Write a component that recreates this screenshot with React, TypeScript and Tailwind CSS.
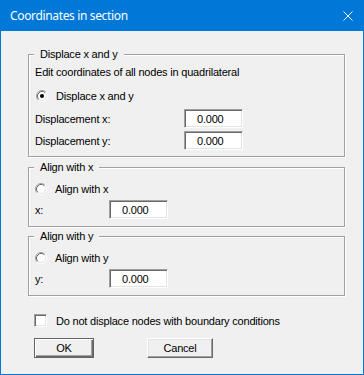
import React from 'react';

const Radio = ({ checked }: { checked?: boolean }) => (
  <svg width="12" height="12" viewBox="0 0 12 12" className="shrink-0">
    <circle cx="6" cy="6" r="4.5" fill="#fff" />
    <path d="M2.11 9.89 A5.5 5.5 0 0 1 9.89 2.11" fill="none" stroke="#a0a0a0" strokeWidth="1" />
    <path d="M9.89 2.11 A5.5 5.5 0 0 1 2.11 9.89" fill="none" stroke="#fff" strokeWidth="1" />
    <path d="M2.82 9.18 A4.5 4.5 0 0 1 9.18 2.82" fill="none" stroke="#696969" strokeWidth="1" />
    <path d="M9.18 2.82 A4.5 4.5 0 0 1 2.82 9.18" fill="none" stroke="#e3e3e3" strokeWidth="1" />
    {checked && <circle cx="6" cy="6" r="2" fill="#000" />}
  </svg>
);

const Field = ({ value }: { value: string }) => (
  <div className="flex h-[19px] w-[59px] items-center border border-t-[#a0a0a0] border-l-[#a0a0a0] border-b-white border-r-white bg-white pl-[12px] shadow-[inset_1px_1px_0_#696969,inset_-1px_-1px_0_#e3e3e3]">
    {value}
  </div>
);

const Group = ({ label, className, children }: { label: string; className: string; children: React.ReactNode }) => (
  <div className={`relative w-[317px] border border-[#a0a0a0] shadow-[inset_1px_1px_0_#fff,1px_1px_0_#fff] ${className}`}>
    <span className="absolute left-[5px] top-[-8px] bg-[#f0f0f0] px-[6px] leading-[14px]">{label}</span>
    {children}
  </div>
);

export default function App() {
  return (
    <div className="flex h-[375px] w-[364px] flex-col border-x border-b border-[#0078d7] bg-[#f0f0f0] text-[11px] leading-[14px] tracking-[-0.2px] text-black font-['Liberation_Sans',Arial,sans-serif]">
      {/* title bar */}
      <div className="flex h-[31px] shrink-0 items-center justify-between bg-[#0078d7] pl-[9px] pr-[10px] text-[12px] tracking-[-0.35px] text-white font-['Noto_Sans',sans-serif]">
        <span>Coordinates in section</span>
        <svg width="10" height="10" viewBox="0 0 10 10">
          <path d="M0.5 0.5 L9.5 9.5 M9.5 0.5 L0.5 9.5" stroke="#fff" strokeWidth="1" />
        </svg>
      </div>

      <div className="flex flex-col pl-[27px]">
        <Group label="Displace x and y" className="mt-[23px] h-[103px]">
          <div className="flex flex-col px-[6px]">
            <div className="mt-[10px] h-[14px]">Edit coordinates of all nodes in quadrilateral</div>
            <div className="mt-[10px] flex h-[14px] items-center gap-[8px] pl-[1px]">
              <Radio checked />
              <span>Displace x and y</span>
            </div>
            <div className="mt-[6px] flex h-[19px] items-center">
              <span className="w-[149px]">Displacement x:</span>
              <Field value="0.000" />
            </div>
            <div className="mt-[3px] flex h-[19px] items-center">
              <span className="w-[149px]">Displacement y:</span>
              <Field value="0.000" />
            </div>
          </div>
        </Group>

        <Group label="Align with x" className="mt-[10px] h-[60px]">
          <div className="flex flex-col px-[6px]">
            <div className="mt-[14px] flex h-[14px] items-center gap-[8px]">
              <Radio />
              <span>Align with x</span>
            </div>
            <div className="mt-[4px] flex h-[19px] items-center">
              <span className="w-[74px]">x:</span>
              <Field value="0.000" />
            </div>
          </div>
        </Group>

        <Group label="Align with y" className="mt-[9px] h-[60px]">
          <div className="flex flex-col px-[6px]">
            <div className="mt-[14px] flex h-[14px] items-center gap-[8px]">
              <Radio />
              <span>Align with y</span>
            </div>
            <div className="mt-[4px] flex h-[19px] items-center">
              <span className="w-[74px]">y:</span>
              <Field value="0.000" />
            </div>
          </div>
        </Group>

        <div className="ml-[6px] mt-[18px] flex h-[13px] items-center gap-[9px]">
          <div className="h-[13px] w-[13px] border border-t-[#a0a0a0] border-l-[#a0a0a0] border-b-white border-r-white bg-white shadow-[inset_1px_1px_0_#696969,inset_-1px_-1px_0_#e3e3e3]" />
          <span>Do not displace nodes with boundary conditions</span>
        </div>

        <div className="ml-[6px] mt-[11px] flex gap-[53px]">
          <button className="flex h-[20px] w-[60px] items-center justify-center border border-[#646464] bg-[#f0f0f0] shadow-[inset_1px_1px_0_#fff,inset_-1px_-1px_0_#696969,inset_-2px_-2px_0_#a0a0a0]">
            OK
          </button>
          <button className="flex h-[20px] w-[66px] items-center justify-center border border-t-white border-l-white border-b-[#696969] border-r-[#696969] bg-[#f0f0f0] shadow-[inset_-1px_-1px_0_#a0a0a0,inset_1px_1px_0_#e3e3e3]">
            Cancel
          </button>
        </div>
      </div>
    </div>
  );
}
